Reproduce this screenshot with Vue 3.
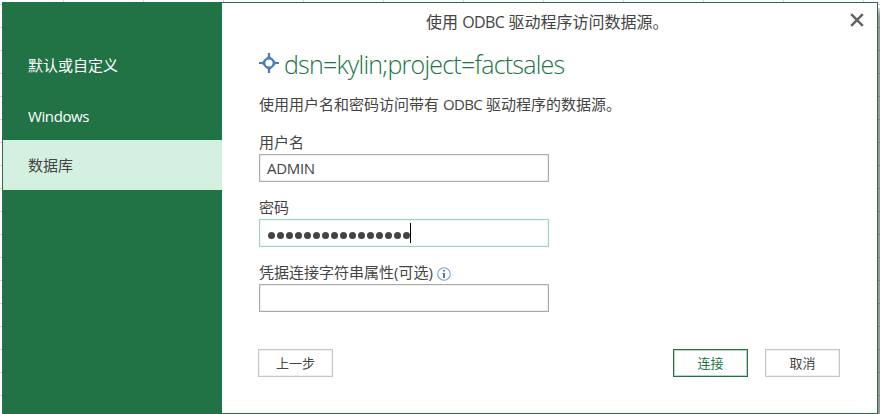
<script setup>
import { ref } from 'vue'

const tabs = ['默认或自定义', 'Windows', '数据库']
const active = ref(2)
const user = ref('ADMIN')
const passwordLength = 16
</script>

<template>
  <div class="sheet">
    <div class="shadow"></div>
    <div class="dialog">
      <nav class="sidebar">
        <div
          v-for="(tab, i) in tabs"
          :key="tab"
          class="tab"
          :class="{ active: i === active }"
          @click="active = i"
        ><span :class="{ latin: i === 1 }">{{ tab }}</span></div>
      </nav>
      <main class="content">
        <header class="titlebar">
          <span class="caption">使用 <span class="odbc">ODBC</span> 驱动程序访问数据源。</span>
          <svg class="close" width="14" height="14" viewBox="0 0 14 14">
            <path d="M1.2 1.2 L12.8 12.8 M12.8 1.2 L1.2 12.8" fill="none" stroke="#666" stroke-width="2.6" />
          </svg>
        </header>
        <div class="source">
          <svg class="target" width="20" height="20" viewBox="0 0 20 20">
            <path d="M10 0V4M10 16V20M0 10H4M16 10H20" stroke="#4a7ebb" stroke-width="2.2" />
            <path d="M10 2.2L17.8 10L10 17.8L2.2 10Z" fill="#4a7ebb" />
            <circle cx="10" cy="10" r="4.7" fill="#fff" stroke="#4a7ebb" stroke-width="2.2" />
          </svg>
          <h1>dsn=kylin;project=factsales</h1>
        </div>
        <p class="desc">使用用户名和密码访问带有 <span class="odbc">ODBC</span> 驱动程序的数据源。</p>

        <div class="field">
          <div class="label">用户名</div>
          <div class="input"><span class="value">{{ user }}</span></div>
        </div>
        <div class="field">
          <div class="label">密码</div>
          <div class="input focus">
            <span v-for="n in passwordLength" :key="n" class="dot"></span>
            <span class="caret"></span>
          </div>
        </div>
        <div class="field">
          <div class="label">
            <span>凭据连接字符串属性(可选)</span>
            <svg class="info" width="14" height="14" viewBox="0 0 14 14">
              <circle cx="7" cy="7" r="6.3" fill="#fff" stroke="#7c9fd3" stroke-width="1.1" />
              <path d="M6 3H8V4.6H6ZM5.4 6H8V11H6V7H5.4Z" fill="#4c78b4" />
            </svg>
          </div>
          <div class="input"></div>
        </div>

        <footer class="actions">
          <button class="btn back">上一步</button>
          <button class="btn primary">连接</button>
          <button class="btn">取消</button>
        </footer>
      </main>
    </div>
  </div>
</template>

<style>
body { margin: 0; overflow: hidden; }
</style>

<style scoped>
* { box-sizing: border-box; }
.sheet {
  position: relative;
  width: 880px;
  height: 414px;
  padding: 2px 2px 0;
  background:
    repeating-linear-gradient(to right, transparent 0 63px, #d4d4d4 63px 64px, transparent 64px 80px),
    repeating-linear-gradient(to bottom, transparent 0 4px, #d4d4d4 4px 5px, transparent 5px 23px),
    #fff;
  font-family: "Open Sans", "Noto Sans CJK SC", sans-serif;
  font-size: 15px;
  color: #444;
}
.shadow {
  position: absolute;
  left: 878px;
  top: 8px;
  width: 2px;
  height: 406px;
  background: linear-gradient(to bottom, rgba(0,0,0,.15), rgba(0,0,0,.4) 8px);
}
.dialog {
  display: flex;
  width: 876px;
  height: 412px;
  border: 1px solid #217346;
  background: #fff;
}
.sidebar {
  width: 219px;
  padding-top: 37px;
  background: #217346;
  color: #fff;
}
.tab {
  display: flex;
  align-items: center;
  height: 50px;
  padding-left: 25px;
  line-height: 20px;
}
.tab.active { background: #d3f0e0; color: #444; }
.latin { font-size: 15px; letter-spacing: -.4px; padding-top: 1px; }
.content {
  flex: 1;
  display: flex;
  flex-direction: column;
  padding-left: 37px;
}
.titlebar {
  display: flex;
  height: 40px;
  padding: 9px 13px 0 167px;
  font-size: 16px;
  line-height: 20px;
  white-space: nowrap;
}
.close { margin: 1px 0 0 auto; }
.odbc { letter-spacing: -.6px; }
.source {
  display: flex;
  height: 42px;
  padding-top: 10px;
}
.target { flex: none; }
h1 {
  margin: -6px 0 0 5px;
  font-size: 25px;
  font-weight: 300;
  line-height: 34px;
  letter-spacing: -.77px;
  color: #217346;
  white-space: nowrap;
}
.desc {
  height: 44px;
  margin: 0;
  padding-top: 9px;
  line-height: 20px;
  white-space: nowrap;
}
.field { height: 65px; }
.label {
  display: flex;
  align-items: center;
  height: 25px;
  padding-top: 1px;
  line-height: 24px;
  white-space: nowrap;
}
.info { margin: 3px 0 0 4px; }
.input {
  display: flex;
  align-items: center;
  width: 290px;
  height: 28px;
  padding-left: 7px;
  border: 1px solid #ababab;
  box-shadow: inset 0 0 0 1px #eee;
}
.input.focus { padding-left: 7px; border-color: #9fd5b7; box-shadow: inset 0 0 0 1px #eaf6ef; }
.value { font-size: 15px; letter-spacing: -.3px; }
.dot {
  width: 7px;
  height: 7px;
  margin: 4px 1px 0;
  border-radius: 50%;
  background: #444;
}
.caret { width: 1px; height: 20px; margin-left: -1px; background: #000; }
.actions {
  display: flex;
  margin: 25px 37px 0 -1px;
}
.btn {
  width: 75px;
  height: 28px;
  padding: 0;
  border: 1px solid #c6c6c6;
  box-shadow: inset 0 0 0 1px #f0f0f0;
  background: #fff;
  color: #444;
  font: 13px/24px "Noto Sans CJK SC", sans-serif;
}
.back { margin-right: auto; }
.primary {
  margin-right: 17px;
  border-color: #217346;
  box-shadow: inset 0 0 0 1px #b9d5c6;
  color: #217346;
}
</style>
